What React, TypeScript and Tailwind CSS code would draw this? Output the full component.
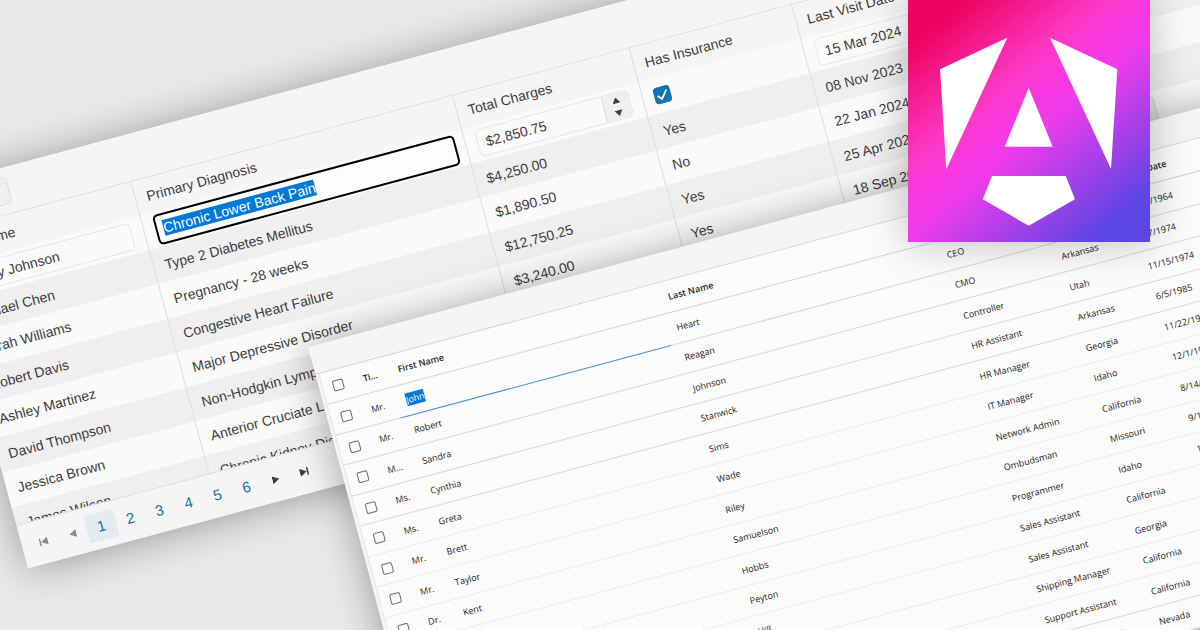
import { ReactNode } from 'react';

interface Patient {
  name: string;
  diagnosis: string;
  charges: string;
  insured: string;
  lastVisit: string;
}

interface Employee {
  title: string;
  firstName: string;
  lastName: string;
  position: string;
  state: string;
  birthDate: string;
}

const patients: Patient[] = [
  { name: 'Michael Chen', diagnosis: 'Type 2 Diabetes Mellitus', charges: '$4,250.00', insured: 'Yes', lastVisit: '08 Nov 2023' },
  { name: 'Sarah Williams', diagnosis: 'Pregnancy - 28 weeks', charges: '$1,890.50', insured: 'No', lastVisit: '22 Jan 2024' },
  { name: 'Robert Davis', diagnosis: 'Congestive Heart Failure', charges: '$12,750.25', insured: 'Yes', lastVisit: '25 Apr 2024' },
  { name: 'Ashley Martinez', diagnosis: 'Major Depressive Disorder', charges: '$3,240.00', insured: 'Yes', lastVisit: '18 Sep 2023' },
  { name: 'David Thompson', diagnosis: 'Non-Hodgkin Lymphoma', charges: '$28,900.00', insured: 'Yes', lastVisit: '02 May 2024' },
  { name: 'Jessica Brown', diagnosis: 'Anterior Cruciate Ligament Tear', charges: '$8,640.75', insured: 'No', lastVisit: '14 Feb 2024' },
  { name: 'James Wilson', diagnosis: 'Chronic Kidney Disease', charges: '$6,120.00', insured: 'Yes', lastVisit: '30 Mar 2024' },
];

const employees: Employee[] = [
  { title: 'Mr.', firstName: 'John', lastName: 'Heart', position: 'CEO', state: 'California', birthDate: '3/16/1964' },
  { title: 'Mr.', firstName: 'Robert', lastName: 'Reagan', position: 'CMO', state: 'Arkansas', birthDate: '9/7/1974' },
  { title: 'M...', firstName: 'Sandra', lastName: 'Johnson', position: 'Controller', state: 'Utah', birthDate: '11/15/1974' },
  { title: 'Ms.', firstName: 'Cynthia', lastName: 'Stanwick', position: 'HR Assistant', state: 'Arkansas', birthDate: '6/5/1985' },
  { title: 'Ms.', firstName: 'Greta', lastName: 'Sims', position: 'HR Manager', state: 'Georgia', birthDate: '11/22/1977' },
  { title: 'Mr.', firstName: 'Brett', lastName: 'Wade', position: 'IT Manager', state: 'Idaho', birthDate: '12/1/1968' },
  { title: 'Mr.', firstName: 'Taylor', lastName: 'Riley', position: 'Network Admin', state: 'California', birthDate: '8/14/1982' },
  { title: 'Dr.', firstName: 'Kent', lastName: 'Samuelson', position: 'Ombudsman', state: 'Missouri', birthDate: '9/11/1972' },
  { title: 'Mr.', firstName: 'Wally', lastName: 'Hobbs', position: 'Programmer', state: 'Idaho', birthDate: '12/24/1984' },
  { title: 'Mrs.', firstName: 'Olivia', lastName: 'Peyton', position: 'Sales Assistant', state: 'California', birthDate: '6/5/1981' },
  { title: 'Ms.', firstName: 'Violet', lastName: 'Hill', position: 'Sales Assistant', state: 'Georgia', birthDate: '4/11/1983' },
  { title: 'Mr.', firstName: 'Victor', lastName: 'Norris', position: 'Shipping Manager', state: 'California', birthDate: '7/23/1986' },
  { title: 'Ms.', firstName: 'Kelly', lastName: 'Rodriguez', position: 'Support Assistant', state: 'California', birthDate: '5/11/1988' },
  { title: 'Mr.', firstName: 'James', lastName: 'Anderson', position: 'Support Assistant', state: 'Nevada', birthDate: '1/29/1987' },
];

const GridCell = ({ children }: { children: ReactNode }) => (
  <td className="border-l border-[#dedede] px-[11px] py-0 whitespace-nowrap first:border-l-0">{children}</td>
);

const RowButtons = () => (
  <div className="flex gap-2">
    <button type="button" className="h-7 w-[62px] rounded-[5px] border border-[#d6d6d6] bg-[#efefef]">Edit</button>
    <button type="button" className="h-7 w-[64px] rounded-[5px] border border-[#d6d6d6] bg-[#efefef]">Delete</button>
  </div>
);

const PatientGrid = () => (
  <section className="absolute top-[188px] left-[-74px] w-[1340px] origin-top-left -rotate-[15deg] bg-[#f5f5f5] font-['Liberation_Sans',Arial,sans-serif] text-[14px] leading-5 text-[#3d3d3d] shadow-[0_2px_40px_rgba(0,0,0,0.35)]">
    <div className="flex h-[46px] items-center px-2">
      <button type="button" className="h-7 w-[72px] rounded-[5px] border border-[#dedede] bg-[#efefef] text-white">Add new</button>
    </div>

    <div className="h-[303px] overflow-hidden">
      <table className="w-full table-fixed border-separate border-spacing-0">
        <colgroup>
          <col className="w-[199px]" />
          <col className="w-[333px]" />
          <col className="w-[183px]" />
          <col className="w-[168px]" />
          <col className="w-[180px]" />
          <col />
        </colgroup>
        <thead>
          <tr className="h-9 text-left [&>th]:border-t [&>th]:border-l [&>th]:border-[#dedede] [&>th]:px-[11px] [&>th]:font-normal [&>th:first-child]:border-l-0">
            <th>Full Name</th>
            <th>Primary Diagnosis</th>
            <th>Total Charges</th>
            <th>Has Insurance</th>
            <th>Last Visit Date</th>
            <th></th>
          </tr>
        </thead>
        <tbody>
          <tr className="h-9 bg-[#fafafa]">
            <GridCell>
              <input
                aria-label="Full Name"
                defaultValue="Emily Johnson"
                className="block h-7 w-[176px] rounded-[5px] border border-[#e6e6e6] bg-transparent px-2"
              />
            </GridCell>
            <GridCell>
              <label className="flex h-[31px] w-[312px] items-center rounded-[5px] border-2 border-black bg-[#fdfdfd] px-[6px]">
                <input
                  aria-label="Primary Diagnosis"
                  defaultValue="Chronic Lower Back Pain"
                  className="field-sizing-content h-4 bg-[#0078d7] text-white outline-none"
                />
              </label>
            </GridCell>
            <GridCell>
              <div className="flex h-7 w-[159px] overflow-hidden rounded-[5px] border border-[#e6e6e6]">
                <input aria-label="Total Charges" defaultValue="$2,850.75" className="min-w-0 flex-1 px-2" />
                <div className="flex w-[27px] flex-col border-l border-[#dedede] bg-[#efefef]">
                  <button type="button" aria-label="Increase" className="flex flex-1 items-center justify-center">
                    <svg width="8" height="6" viewBox="0 0 8 6" fill="#3d3d3d"><path d="M4 0l4 6H0z" /></svg>
                  </button>
                  <button type="button" aria-label="Decrease" className="flex flex-1 items-center justify-center">
                    <svg width="8" height="6" viewBox="0 0 8 6" fill="#3d3d3d"><path d="M4 6l4-6H0z" /></svg>
                  </button>
                </div>
              </div>
            </GridCell>
            <GridCell>
              <label className="grid size-[17px]">
                <input
                  type="checkbox"
                  aria-label="Has Insurance"
                  defaultChecked
                  className="col-start-1 row-start-1 size-[17px] appearance-none rounded-[4px] bg-[#1274ac]"
                />
                <svg viewBox="0 0 17 17" fill="none" stroke="white" strokeWidth="1.8" className="pointer-events-none col-start-1 row-start-1">
                  <path d="M3.5 8.5l3.5 4 6.5-8" />
                </svg>
              </label>
            </GridCell>
            <GridCell>
              <input
                aria-label="Last Visit Date"
                defaultValue="15 Mar 2024"
                className="block h-7 w-[158px] rounded-[5px] border border-[#e6e6e6] bg-transparent px-2"
              />
            </GridCell>
            <GridCell><RowButtons /></GridCell>
          </tr>
          {patients.map((patient) => (
            <tr key={patient.name} className="h-9 bg-[#fafafa] even:h-[35px] even:bg-[#efefef]">
              <GridCell>{patient.name}</GridCell>
              <GridCell>{patient.diagnosis}</GridCell>
              <GridCell>{patient.charges}</GridCell>
              <GridCell>{patient.insured}</GridCell>
              <GridCell>{patient.lastVisit}</GridCell>
              <GridCell><RowButtons /></GridCell>
            </tr>
          ))}
        </tbody>
      </table>
    </div>

    <nav className="flex h-[45px] items-center border-t border-[#dedede] px-[7px] text-[15px] text-[#1274ac]">
      <button type="button" aria-label="First page" className="flex h-7 w-[30px] items-center justify-center">
        <svg width="10" height="8" viewBox="0 0 10 8" fill="#8a8a8a"><path d="M1 0h1.4v8H1zM9.4 0v8L2.6 4z" /></svg>
      </button>
      <button type="button" aria-label="Previous page" className="flex h-7 w-[30px] items-center justify-center">
        <svg width="7" height="8" viewBox="0 0 7 8" fill="#8a8a8a"><path d="M7 0v8L0 4z" /></svg>
      </button>
      {[1, 2, 3, 4, 5, 6].map((page) => (
        <button key={page} type="button" className={`h-7 w-[30px] ${page === 1 ? 'bg-[#e3ebef]' : ''}`}>
          {page}
        </button>
      ))}
      <button type="button" aria-label="Next page" className="flex h-7 w-[30px] items-center justify-center">
        <svg width="7" height="8" viewBox="0 0 7 8" fill="#3d3d3d"><path d="M0 0v8l7-4z" /></svg>
      </button>
      <button type="button" aria-label="Last page" className="flex h-7 w-[30px] items-center justify-center">
        <svg width="10" height="8" viewBox="0 0 10 8" fill="#3d3d3d"><path d="M7.6 0H9v8H7.6zM.6 0v8l6.8-4z" /></svg>
      </button>
    </nav>
  </section>
);

const RowCheckbox = ({ label }: { label: string }) => (
  <input
    type="checkbox"
    aria-label={label}
    className="block size-[11px] appearance-none rounded-[2px] border border-[#6a6a6a] bg-[#fbfbfb]"
  />
);

const EmployeeGrid = () => (
  <section className="absolute top-[347px] left-[308px] w-[1340px] origin-top-left -rotate-[15deg] bg-[#f5f5f5] font-['Open_Sans','Noto_Sans',sans-serif] text-[9px] leading-4 text-[#222222] shadow-[0_2px_40px_rgba(0,0,0,0.35)]">
    <div className="h-[29px] border-b border-[#d4d4d4]" />
    <div className="pl-[3px]">
      <table className="w-full table-fixed border-separate border-spacing-0 border-l border-[#e4e4e4] bg-[#fbfbfb] text-left">
        <colgroup>
          <col className="w-[31px]" />
          <col className="w-[36px]" />
          <col className="w-[280px]" />
          <col className="w-[280px]" />
          <col className="w-[110px]" />
          <col className="w-[81px]" />
          <col />
        </colgroup>
        <thead>
          <tr className="h-8 [&>th]:border-b [&>th]:border-[#d4d4d4] [&>th]:px-[10px] [&>th]:py-0 [&>th]:font-semibold [&>th]:whitespace-nowrap">
            <th><RowCheckbox label="Select all" /></th>
            <th>Ti...</th>
            <th>First Name</th>
            <th>Last Name</th>
            <th>Position</th>
            <th>State</th>
            <th>Birth Date</th>
          </tr>
        </thead>
        <tbody>
          {employees.map((employee, index) => (
            <tr
              key={index}
              className={`h-8 even:h-[31px] [&>td]:border-b [&>td]:px-[10px] [&>td]:py-0 [&>td]:whitespace-nowrap ${
                index >= 4 && index <= 11 ? '[&>td]:border-[#ebebeb]' : '[&>td]:border-[#d8d8d8]'
              }`}
            >
              <td><RowCheckbox label={`Select ${employee.firstName}`} /></td>
              <td>{employee.title}</td>
              {index === 0 ? (
                <td className="border-[#4a8fcb]!">
                  <input
                    aria-label="First Name"
                    defaultValue={employee.firstName}
                    className="field-sizing-content block h-[13px] bg-[#0078d7] text-white outline-none"
                  />
                </td>
              ) : (
                <td>{employee.firstName}</td>
              )}
              <td>{employee.lastName}</td>
              <td>{employee.position}</td>
              <td>{employee.state}</td>
              <td>{employee.birthDate}</td>
            </tr>
          ))}
        </tbody>
      </table>
    </div>
  </section>
);

const AngularLogo = () => (
  <div className="absolute top-0 right-[50px] size-[242px] bg-[linear-gradient(140deg,#ee0360_11%,#fd38c6_37%,#f838e0_46%,#ee3bec_54%,#5b45e3_89%)] shadow-[0_0_40px_rgba(0,0,0,0.25)]">
    <svg viewBox="0 0 242 242" fill="white" className="size-full" role="img" aria-label="Angular">
      <path d="M32 69.3L99.3 37.7 38.3 169.3z" />
      <path d="M142 37.7l67.3 31.6-6.3 99.7z" />
      <path d="M120.7 87.7l24 59h-48z" />
      <path d="M84 176h73.7l9.3 23.3-46.3 26.4-46-26.4z" />
    </svg>
  </div>
);

export default function App() {
  return (
    <main className="relative h-screen overflow-hidden bg-[#e9e9e9]">
      <PatientGrid />
      <EmployeeGrid />
      <AngularLogo />
    </main>
  );
}
